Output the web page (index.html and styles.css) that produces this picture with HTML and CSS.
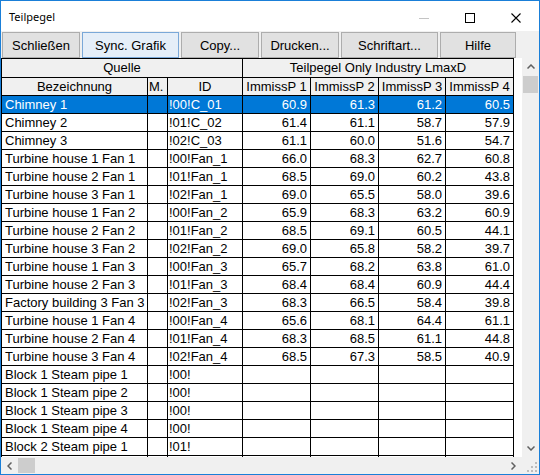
FILE: index.html
```html
<!Doctype html>
<html>
<head>
    <meta charset="UTF-8">
    <title>Teilpegel</title>
    <link rel="stylesheet" href="styles.css">
</head>
<body>
<div class="window">
    <div class="titlebar">
        <span class="title">Teilpegel</span>
        <div class="caption">
            <div class="cap-btn min"><svg width="10" height="10"><line x1="0" y1="5.5" x2="10" y2="5.5" stroke="#c4c4c4"/></svg></div>
            <div class="cap-btn"><svg width="10" height="10"><rect x="0.5" y="0.5" width="9" height="9" fill="none" stroke="#000"/></svg></div>
            <div class="cap-btn"><svg width="10" height="10"><path d="M0.5 0.5L9.5 9.5M9.5 0.5L0.5 9.5" stroke="#000" stroke-width="1.1"/></svg></div>
        </div>
    </div>
    <div class="toolbar">
        <button class="btn w78">Schließen</button>
        <button class="btn w97 focus">Sync. Grafik</button>
        <button class="btn w78">Copy...</button>
        <button class="btn w78">Drucken...</button>
        <button class="btn w97">Schriftart...</button>
        <button class="btn w76">Hilfe</button>
    </div>
    <div class="grid-area">
        <div class="grid-view">
            <table class="grid">
                <colgroup>
                    <col class="c-name"><col class="c-m"><col class="c-id">
                    <col class="c-p"><col class="c-p"><col class="c-p3"><col class="c-p">
                </colgroup>
                <tr class="head top">
                    <td colspan="3">Quelle</td>
                    <td colspan="4">Teilpegel Only Industry LmaxD</td>
                </tr>
                <tr class="head">
                    <td>Bezeichnung</td><td class="m">M.</td><td>ID</td>
                    <td>ImmissP 1</td><td>ImmissP 2</td><td>ImmissP 3</td><td>ImmissP 4</td>
                </tr>
                <tr class="sel"><td class="name">Chimney 1</td><td></td><td class="id">!00!C_01</td><td>60.9</td><td>61.3</td><td>61.2</td><td>60.5</td></tr>
                <tr><td class="name">Chimney 2</td><td></td><td class="id">!01!C_02</td><td>61.4</td><td>61.1</td><td>58.7</td><td>57.9</td></tr>
                <tr><td class="name">Chimney 3</td><td></td><td class="id">!02!C_03</td><td>61.1</td><td>60.0</td><td>51.6</td><td>54.7</td></tr>
                <tr><td class="name">Turbine house 1 Fan 1</td><td></td><td class="id">!00!Fan_1</td><td>66.0</td><td>68.3</td><td>62.7</td><td>60.8</td></tr>
                <tr><td class="name">Turbine house 2 Fan 1</td><td></td><td class="id">!01!Fan_1</td><td>68.5</td><td>69.0</td><td>60.2</td><td>43.8</td></tr>
                <tr><td class="name">Turbine house 3 Fan 1</td><td></td><td class="id">!02!Fan_1</td><td>69.0</td><td>65.5</td><td>58.0</td><td>39.6</td></tr>
                <tr><td class="name">Turbine house 1 Fan 2</td><td></td><td class="id">!00!Fan_2</td><td>65.9</td><td>68.3</td><td>63.2</td><td>60.9</td></tr>
                <tr><td class="name">Turbine house 2 Fan 2</td><td></td><td class="id">!01!Fan_2</td><td>68.5</td><td>69.1</td><td>60.5</td><td>44.1</td></tr>
                <tr><td class="name">Turbine house 3 Fan 2</td><td></td><td class="id">!02!Fan_2</td><td>69.0</td><td>65.8</td><td>58.2</td><td>39.7</td></tr>
                <tr><td class="name">Turbine house 1 Fan 3</td><td></td><td class="id">!00!Fan_3</td><td>65.7</td><td>68.2</td><td>63.8</td><td>61.0</td></tr>
                <tr><td class="name">Turbine house 2 Fan 3</td><td></td><td class="id">!01!Fan_3</td><td>68.4</td><td>68.4</td><td>60.9</td><td>44.4</td></tr>
                <tr><td class="name">Factory building 3 Fan 3</td><td></td><td class="id">!02!Fan_3</td><td>68.3</td><td>66.5</td><td>58.4</td><td>39.8</td></tr>
                <tr><td class="name">Turbine house 1 Fan 4</td><td></td><td class="id">!00!Fan_4</td><td>65.6</td><td>68.1</td><td>64.4</td><td>61.1</td></tr>
                <tr><td class="name">Turbine house 2 Fan 4</td><td></td><td class="id">!01!Fan_4</td><td>68.3</td><td>68.5</td><td>61.1</td><td>44.8</td></tr>
                <tr><td class="name">Turbine house 3 Fan 4</td><td></td><td class="id">!02!Fan_4</td><td>68.5</td><td>67.3</td><td>58.5</td><td>40.9</td></tr>
                <tr><td class="name">Block 1 Steam pipe 1</td><td></td><td class="id">!00!</td><td></td><td></td><td></td><td></td></tr>
                <tr><td class="name">Block 1 Steam pipe 2</td><td></td><td class="id">!00!</td><td></td><td></td><td></td><td></td></tr>
                <tr><td class="name">Block 1 Steam pipe 3</td><td></td><td class="id">!00!</td><td></td><td></td><td></td><td></td></tr>
                <tr><td class="name">Block 1 Steam pipe 4</td><td></td><td class="id">!00!</td><td></td><td></td><td></td><td></td></tr>
                <tr><td class="name">Block 2 Steam pipe 1</td><td></td><td class="id">!01!</td><td></td><td></td><td></td><td></td></tr>
                <tr><td></td><td></td><td></td><td></td><td></td><td></td><td></td></tr>
            </table>
        </div>
        <div class="vscroll">
            <div class="arrow"><svg width="8" height="5"><polyline points="0.5,4.5 4,1 7.5,4.5" fill="none" stroke="#606060" stroke-width="1.5"/></svg></div>
            <div class="vthumb"></div>
            <div class="vtrack"></div>
            <div class="arrow"><svg width="8" height="5"><polyline points="0.5,0.5 4,4 7.5,0.5" fill="none" stroke="#606060" stroke-width="1.5"/></svg></div>
        </div>
    </div>
    <div class="hbar">
        <div class="hscroll">
            <div class="arrow"><svg width="5" height="8"><polyline points="4.5,0.5 1,4 4.5,7.5" fill="none" stroke="#606060" stroke-width="1.5"/></svg></div>
            <div class="hthumb"></div>
            <div class="htrack"></div>
            <div class="arrow"><svg width="5" height="8"><polyline points="0.5,0.5 4,4 0.5,7.5" fill="none" stroke="#606060" stroke-width="1.5"/></svg></div>
        </div>
        <div class="grip">
            <svg width="11" height="11">
                <rect x="8" y="0" width="2" height="2" fill="#bcbcbc"/>
                <rect x="4" y="4" width="2" height="2" fill="#bcbcbc"/>
                <rect x="8" y="4" width="2" height="2" fill="#bcbcbc"/>
                <rect x="0" y="8" width="2" height="2" fill="#bcbcbc"/>
                <rect x="4" y="8" width="2" height="2" fill="#bcbcbc"/>
                <rect x="8" y="8" width="2" height="2" fill="#bcbcbc"/>
            </svg>
        </div>
    </div>
</div>
</body>
</html>
```

FILE: styles.css
```css
body{
    margin: 0;
    padding: 0;
    font-family: "Liberation Sans", Arial, sans-serif;
}
.window{
    width: 540px;height: 475px;
    box-sizing: border-box;
    border: 1px solid #1a7fd8;
    background-color: #f0f0f0;
    display: flex;
    flex-direction: column;
    overflow: hidden;
}
.titlebar{
    height: 30px;
    background-color: #fff;
    display: flex;
    align-items: center;
    flex-shrink: 0;
}
.title{
    font: 11px "Noto Sans", sans-serif;
    padding-left: 8px;
    flex: 1;
}
.caption{
    display: flex;
    height: 30px;
}
.cap-btn{
    width: 46px;height: 30px;
    display: flex;
    align-items: center;
    justify-content: center;
}
.cap-btn svg{
    display: block;
    margin-top: 3px;
}
.toolbar{
    height: 27px;
    box-sizing: border-box;
    padding: 1px 0 0 1px;
    display: flex;
    gap: 2px;
    flex-shrink: 0;
}
.btn{
    height: 26px;
    margin: 0;padding: 0;
    border: 1px solid #adadad;
    background-color: #e1e1e1;
    font: 13px "Liberation Sans", Arial, sans-serif;
    color: #000;
}
.btn.focus{
    border-color: #7aa8d8;
    background-color: #e5eef8;
}
.w78{width: 78px;}
.w97{width: 97px;}
.w76{width: 76px;}
.grid-area{
    height: 399px;
    display: flex;
    flex-shrink: 0;
}
.grid-view{
    width: 521px;height: 399px;
    background-color: #fff;
    overflow: hidden;
}
.grid{
    border-collapse: separate;
    border-spacing: 0;
    table-layout: fixed;
    width: 513px;
    border-top: 1px solid #000;
    border-left: 1px solid #000;
    font-size: 13px;
    color: #000;
}
.c-name{width: 146px;}
.c-m{width: 20px;}
.c-id{width: 75px;}
.c-p{width: 68px;}
.c-p3{width: 67px;}
.grid td{
    height: 17px;
    line-height: 17px;
    padding: 0 3px 0 0;
    border-right: 1px solid #000;
    border-bottom: 1px solid #000;
    white-space: nowrap;
    overflow: hidden;
    text-align: right;
}
.grid td.name{
    text-align: left;
    padding-left: 3px;
}
.grid td.id{
    text-align: left;
    padding-left: 1px;
}
.grid .head td{
    background-color: #f0f0f0;
    text-align: center;
    padding: 0;
}
.grid .head.top td{
    height: 18px;
    line-height: 18px;
}
.grid .head td.m{
    text-align: left;
    padding-left: 1px;
}
.grid .sel td{
    background-color: #0078d7;
    color: #fff;
}
.vscroll{
    width: 17px;
    display: flex;
    flex-direction: column;
}
.arrow{
    width: 17px;height: 17px;
    display: flex;
    align-items: center;
    justify-content: center;
    flex-shrink: 0;
}
.arrow svg{
    display: block;
}
.vthumb{
    height: 17px;
    margin: 1px 1px 0;
    background-color: #cdcdcd;
}
.vtrack{
    flex: 1;
}
.hbar{
    height: 17px;
    display: flex;
    flex-shrink: 0;
}
.hscroll{
    width: 521px;
    display: flex;
}
.hthumb{
    width: 17px;
    margin: 1px 0;
    background-color: #cdcdcd;
}
.htrack{
    flex: 1;
}
.grip{
    width: 17px;height: 17px;
    display: flex;
    align-items: flex-end;
    justify-content: flex-end;
}
.grip svg{
    display: block;
    margin: 0 1px 1px 0;
}
```
